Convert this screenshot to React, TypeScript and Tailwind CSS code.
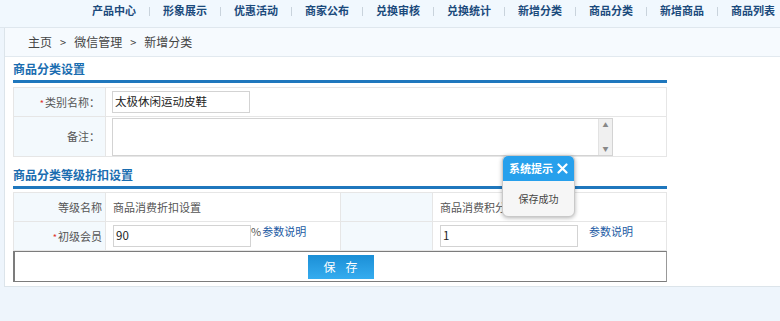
const navItems = ['产品中心', '形象展示', '优惠活动', '商家公布', '兑换审核', '兑换统计', '新增分类', '商品分类', '新增商品', '商品列表'];

const font = 'font-["Noto_Sans_CJK_SC","Noto_Sans",sans-serif]';

function Star() {
  return <span className="mr-[1px] text-[9px] text-[#e0302a]">*</span>;
}

export default function App() {
  return (
    <div className={`relative h-[321px] w-[780px] overflow-hidden bg-[#eef5fc] ${font}`}>
      {/* top nav */}
      <div className="flex h-[28px] items-start border-b border-[#dfe7ee] bg-[#f1f8fe] pl-[92px] pt-[4px]">
        {navItems.map((item, i) => (
          <div key={item} className="flex items-center">
            {i > 0 && <span className="mx-[13px] mt-[1px] h-[9px] w-px bg-[#c9d3dc]" />}
            <span className="whitespace-nowrap text-[11px] font-bold leading-[13px] text-[#1b4a7c]">{item}</span>
          </div>
        ))}
      </div>

      {/* main panel */}
      <div className="ml-[4px] w-[800px] border border-t-0 border-[#dce4ea] bg-white pb-[4px]">
        <div className="flex h-[29px] items-center border-b border-[#e2e9ef] bg-[#f6fafe] pl-[23px] text-[12px] text-[#444]">
          <span>主页</span>
          <span className="mx-[8px] text-[11px]">&gt;</span>
          <span>微信管理</span>
          <span className="mx-[8px] text-[11px]">&gt;</span>
          <span>新增分类</span>
        </div>

        <div className="pl-[8px]">
          <div className="pt-[5px] text-[12px] font-bold leading-[14px] text-[#1a6db0]">商品分类设置</div>
          <div className="mt-[4px] h-[3px] w-[654px] bg-[#1f77bd]" />
          <table className="mt-[4px] w-[654px] border-collapse text-[11px] text-[#555]">
            <tbody>
              <tr className="h-[29px]">
                <td className="w-[92px] border border-[#e6e6e6] bg-[#f3f9fd] pr-[5px] text-right">
                  <Star />类别名称：
                </td>
                <td className="border border-[#e6e6e6] pl-[6px]">
                  <div className="flex h-[22px] w-[138px] items-center border border-[#d3d3d3] pl-[2px] text-[11.5px] text-[#222]">太极休闲运动皮鞋</div>
                </td>
              </tr>
              <tr className="h-[40px]">
                <td className="border border-[#e6e6e6] bg-[#f3f9fd] pr-[5px] text-right">备注：</td>
                <td className="border border-[#e6e6e6] pl-[6px]">
                  <div className="flex h-[38px] w-[501px] border border-[#d3d3d3]">
                    <div className="flex-1" />
                    <div className="flex w-[14px] flex-col items-center justify-between border-l border-[#e2e2e2] bg-[#f0f0f0] py-[2px] text-[6px] leading-[8px] text-[#888]">
                      <span>▲</span>
                      <span>▼</span>
                    </div>
                  </div>
                </td>
              </tr>
            </tbody>
          </table>

          <div className="mt-[11px] text-[12px] font-bold leading-[14px] text-[#1a6db0]">商品分类等级折扣设置</div>
          <div className="mt-[4px] h-[3px] w-[654px] bg-[#1f77bd]" />
          <table className="mt-[3px] w-[654px] border-collapse text-[11px] text-[#555]">
            <tbody>
              <tr className="h-[29px]">
                <td className="w-[92px] border border-[#e6e6e6] bg-[#f3f9fd] pr-[3px] text-right">等级名称</td>
                <td className="w-[235px] border border-[#e6e6e6] pl-[7px]">商品消费折扣设置</td>
                <td className="w-[92px] border border-[#e6e6e6] bg-[#f3f9fd]" />
                <td className="border border-[#e6e6e6] pl-[7px]">商品消费积分设置</td>
              </tr>
              <tr className="h-[29px]">
                <td className="border border-[#e6e6e6] bg-[#f3f9fd] pr-[3px] text-right">
                  <Star />初级会员
                </td>
                <td className="border border-[#e6e6e6] pl-[7px]">
                  <div className="flex items-start">
                    <div className="flex h-[22px] w-[138px] items-center border border-[#d3d3d3] pl-[2px] text-[11.5px] text-[#222]">90</div>
                    <span className="-mt-[1px] text-[11px] leading-[14px] text-[#555]">%</span>
                    <span className="-mt-[1px] ml-[1px] text-[11px] leading-[14px] text-[#1b5aa3]">参数说明</span>
                  </div>
                </td>
                <td className="border border-[#e6e6e6] bg-[#f3f9fd]" />
                <td className="border border-[#e6e6e6] pl-[7px]">
                  <div className="flex items-start">
                    <div className="flex h-[22px] w-[138px] items-center border border-[#d3d3d3] pl-[2px] text-[11.5px] text-[#222]">1</div>
                    <span className="-mt-[1px] ml-[11px] text-[11px] leading-[14px] text-[#1b5aa3]">参数说明</span>
                  </div>
                </td>
              </tr>
            </tbody>
          </table>
          <div className="flex h-[31px] w-[654px] items-center justify-center border border-l-2 border-[#7c7c7c] border-r-[#999]">
            <button className="h-[24px] w-[66px] bg-gradient-to-b from-[#1b8fd6] to-[#35acef] text-[12px] tracking-[10px] text-white indent-[10px]">保存</button>
          </div>
        </div>
      </div>

      {/* system tip popup */}
      <div className="absolute left-[502px] top-[155px] w-[73px] overflow-hidden rounded-[6px] border border-[#c9c9c9] bg-[#f6f6f6] shadow-[0_1px_4px_rgba(0,0,0,0.3)]">
        <div className="flex h-[25px] items-center bg-[#27a0ec] pl-[6px] text-[11px] font-bold text-white">
          系统提示
          <svg className="ml-[4px]" width="11" height="11" viewBox="0 0 11 11">
            <path d="M1.5 1.5 L9.5 9.5 M9.5 1.5 L1.5 9.5" stroke="white" strokeWidth="2.2" strokeLinecap="round" />
          </svg>
        </div>
        <div className="flex h-[35px] items-center justify-center text-[10px] text-[#444]">保存成功</div>
      </div>
    </div>
  );
}
